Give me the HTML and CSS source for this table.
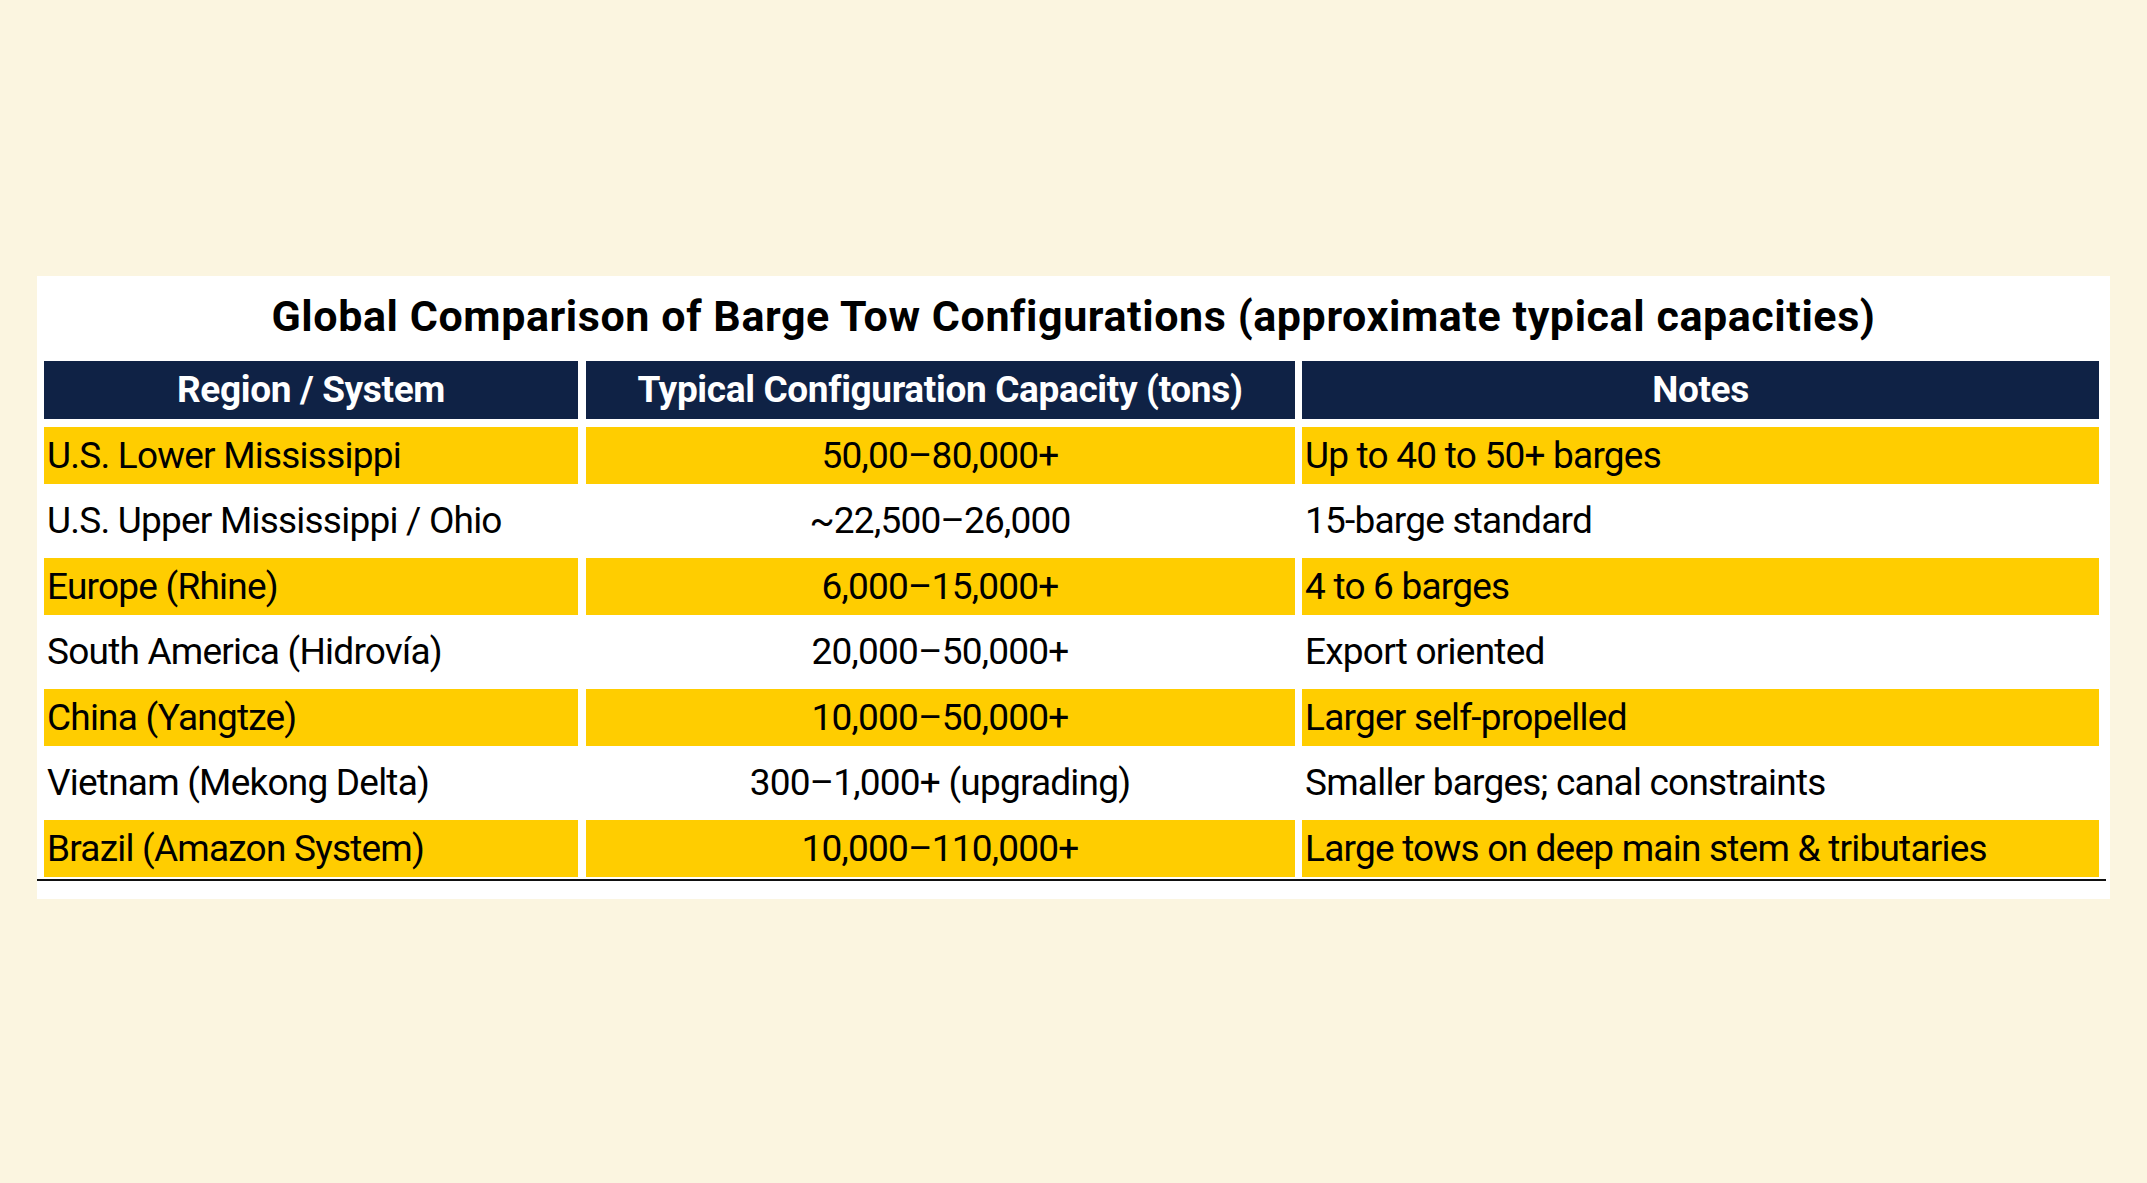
FILE: index.html
```html
<!DOCTYPE html>
<html lang="en">
<head>
<meta charset="utf-8">
<title>Global Comparison of Barge Tow Configurations</title>
<link rel="stylesheet" href="styles.css">
</head>
<body>
<main class="card">
  <h1 class="title">Global Comparison of Barge Tow Configurations (approximate typical capacities)</h1>
  <div class="table-wrap">
    <div class="grid">
      <div class="cell head">Region / System</div>
      <div class="cell head">Typical Configuration Capacity (tons)</div>
      <div class="cell head">Notes</div>

      <div class="cell hl">U.S. Lower Mississippi</div>
      <div class="cell hl center">50,00–80,000+</div>
      <div class="cell hl">Up to 40 to 50+ barges</div>

      <div class="cell">U.S. Upper Mississippi / Ohio</div>
      <div class="cell center">~22,500–26,000</div>
      <div class="cell">15-barge standard</div>

      <div class="cell hl">Europe (Rhine)</div>
      <div class="cell hl center">6,000–15,000+</div>
      <div class="cell hl">4 to 6 barges</div>

      <div class="cell">South America (Hidrovía)</div>
      <div class="cell center">20,000–50,000+</div>
      <div class="cell">Export oriented</div>

      <div class="cell hl">China (Yangtze)</div>
      <div class="cell hl center">10,000–50,000+</div>
      <div class="cell hl">Larger self-propelled</div>

      <div class="cell">Vietnam (Mekong Delta)</div>
      <div class="cell center">300–1,000+ (upgrading)</div>
      <div class="cell">Smaller barges; canal constraints</div>

      <div class="cell hl">Brazil (Amazon System)</div>
      <div class="cell hl center">10,000–110,000+</div>
      <div class="cell hl">Large tows on deep main stem &amp; tributaries</div>
    </div>
  </div>
</main>
</body>
</html>
```

FILE: styles.css
```css
html, body {
  margin: 0;
  padding: 0;
}

body {
  background: #fbf5e0;
  height: 1183px;
  display: flex;
  align-items: center;
  justify-content: center;
  font-family: Roboto, "Liberation Sans", sans-serif;
  color: #000;
}

.card {
  width: 2073px;
  height: 623px;
  box-sizing: border-box;
  background: #ffffff;
  padding: 15px 0 18px 0;
  margin-bottom: 8px;
}

.title {
  margin: 0 0 20px 0;
  text-align: center;
  font-size: 43px;
  line-height: 50px;
  font-weight: 700;
  letter-spacing: 0.58px;
}

.table-wrap {
  margin-right: 4px;
  padding: 0 7px 2px 7px;
  border-bottom: 2px solid #111;
}

.grid {
  display: grid;
  grid-template-columns: 534px 709px 797px;
  grid-auto-rows: 57.5px;
  column-gap: 7.5px;
  row-gap: 8px;
}

.cell {
  display: flex;
  align-items: center;
  padding-left: 3px;
  font-size: 37px;
  letter-spacing: -0.78px;
  white-space: nowrap;
}

.head {
  background: #0f2245;
  color: #ffffff;
  font-weight: 700;
  justify-content: center;
  padding-left: 0;
  letter-spacing: -0.35px;
}

.hl {
  background: #ffcd00;
}

.center {
  justify-content: center;
  padding-left: 0;
}
```
